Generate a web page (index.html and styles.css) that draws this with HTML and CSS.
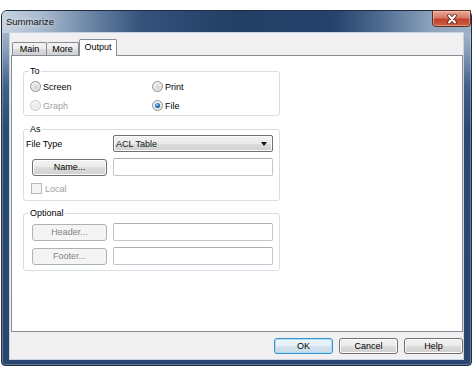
FILE: index.html
```html
<!DOCTYPE html>
<html lang="en">
<head>
  <meta charset="UTF-8" />
  <title>Summarize</title>
  <link rel="stylesheet" href="styles.css">
</head>
<body>
  <div class="window">
    <div class="titlebar">
      <span class="title">Summarize</span>
      <button class="close" aria-label="Close">
        <svg width="14" height="10" viewBox="0 0 14 10">
          <path d="M4 1.5 L10 8.5 M10 1.5 L4 8.5" stroke="#5a2418" stroke-width="3.6" stroke-linecap="round" fill="none"/>
          <path d="M4 1.5 L10 8.5 M10 1.5 L4 8.5" stroke="#ffffff" stroke-width="2" stroke-linecap="round" fill="none"/>
        </svg>
      </button>
    </div>

    <div class="frame">
      <div class="client">
        <div class="tabs">
          <div class="tab">Main</div>
          <div class="tab tab-more">More</div>
          <div class="tab active">Output</div>
        </div>

        <div class="panel">
          <fieldset class="group group-to">
            <legend>To</legend>
            <div class="radio-grid">
              <label class="radio"><span class="dot"></span>Screen</label>
              <label class="radio"><span class="dot"></span>Print</label>
              <label class="radio disabled"><span class="dot"></span>Graph</label>
              <label class="radio checked"><span class="dot"></span>File</label>
            </div>
          </fieldset>

          <fieldset class="group group-as">
            <legend>As</legend>
            <div class="form-grid">
              <span class="field-label">File Type</span>
              <div class="combo"><span>ACL Table</span><span class="arrow"></span></div>

              <button class="btn btn-side">Name...</button>
              <div class="textbox"></div>

              <label class="check disabled"><span class="box"></span>Local</label>
            </div>
          </fieldset>

          <fieldset class="group group-optional">
            <legend>Optional</legend>
            <div class="form-grid">
              <button class="btn btn-side" disabled>Header...</button>
              <div class="textbox"></div>

              <button class="btn btn-side" disabled>Footer...</button>
              <div class="textbox"></div>
            </div>
          </fieldset>
        </div>

        <div class="actions">
          <button class="btn btn-action default">OK</button>
          <button class="btn btn-action">Cancel</button>
          <button class="btn btn-action">Help</button>
        </div>
      </div>
    </div>
  </div>
</body>
</html>
```

FILE: styles.css
```css
body {
  margin: 0;
  background: #ffffff;
  font-family: 'Liberation Sans', Arial, sans-serif;
  font-size: 9px;
  color: #000;
}
.window {
  box-sizing: border-box;
  width: 471px;
  height: 356px;
  margin: 10px 0 0 1px;
  border: 1px solid #1c2d44;
  border-radius: 6px 6px 4px 4px;
  background: linear-gradient(to bottom, #b9c8d9 0, #8fa5be 35px, #41618a 75px, #2b4a71 120px, #284670 100%);
  box-shadow: inset 0 0 0 1px rgba(255, 255, 255, 0.28);
  display: flex;
  flex-direction: column;
}
.titlebar {
  height: 22px;
  display: flex;
  align-items: flex-start;
  justify-content: space-between;
  padding-left: 4px;
  border-radius: 5px 5px 0 0;
  background: linear-gradient(to right, #c6d2e0 0, #a8b9cd 40px, #6983a5 90px, #34527a 140px, #223f66 230px, #24426a 330px, #4f6d92 380px, #8ea3bc 430px, #9fb1c6 100%);
}
.title {
  line-height: 22px;
  font-size: 9.5px;
  color: #111;
  text-shadow: 0 0 5px rgba(255, 255, 255, 0.9);
}
.close {
  width: 39px;
  height: 17px;
  margin-top: -1px;
  padding: 0;
  border: 1px solid #5b2a22;
  border-radius: 0 0 4px 4px;
  background: linear-gradient(to bottom, #e9a796 0, #d57a66 45%, #c1412a 55%, #cf5d3d 100%);
  box-shadow: inset 0 0 0 1px rgba(255, 220, 210, 0.45);
  display: flex;
  align-items: center;
  justify-content: center;
}
.frame {
  flex: 1;
  padding: 0 8px 6px 8px;
  display: flex;
}
.client {
  flex: 1;
  background: #f0f0f0;
  box-shadow: 0 0 0 1px #c9d4e1;
  padding: 6px 0 0 1px;
  display: flex;
  flex-direction: column;
}
.tabs {
  height: 16px;
  padding-left: 1px;
  display: flex;
  align-items: flex-end;
}
.tab {
  box-sizing: border-box;
  height: 13px;
  width: 35px;
  line-height: 12px;
  text-align: center;
  border: 1px solid #898c95;
  border-bottom: none;
  border-radius: 2px 2px 0 0;
  background: linear-gradient(to bottom, #f3f3f3 0, #ebebeb 50%, #dddddd 50%, #cfcfcf 100%);
}
.tab + .tab {
  border-left: none;
}
.tab-more {
  width: 32px;
}
.tab.active {
  height: 17px;
  width: 38px;
  margin-bottom: -1px;
  line-height: 14px;
  background: #ffffff;
  border-left: 1px solid #898c95;
  position: relative;
}
.panel {
  box-sizing: border-box;
  height: 277px;
  border: 1px solid #898c95;
  background: #ffffff;
  padding: 9px 0 0 11px;
}
.group {
  box-sizing: border-box;
  width: 257px;
  margin: 0;
  padding: 0;
  min-width: 0;
  border: 1px solid #d5dfe5;
  border-radius: 3px;
}
.group legend {
  padding: 0 1px;
  margin-left: 5px;
  line-height: 12px;
}
.group-as {
  margin-top: 7px;
  padding-bottom: 5px;
}
.group-optional {
  margin-top: 6px;
  padding-bottom: 5px;
}
.radio-grid {
  margin-left: 6px;
  display: grid;
  grid-template-columns: 122px 122px;
  grid-auto-rows: 19px;
}
.radio {
  display: flex;
  align-items: center;
  gap: 2px;
}
.radio .dot {
  box-sizing: border-box;
  width: 11px;
  height: 11px;
  border-radius: 50%;
  border: 1px solid #8e8f8f;
  background: radial-gradient(circle at 55% 60%, #d2d2d2 0, #ececec 55%, #fafafa 100%);
  display: flex;
  align-items: center;
  justify-content: center;
}
.radio.disabled {
  color: #a0a0a0;
}
.radio.disabled .dot {
  border-color: #c8c8c8;
  background: radial-gradient(circle at 55% 60%, #e6e6e6 0, #f4f4f4 60%, #fcfcfc 100%);
}
.radio.checked .dot::after {
  content: "";
  width: 5px;
  height: 5px;
  border-radius: 50%;
  background: radial-gradient(circle at 40% 35%, #9ad8fa 0, #2a78bd 45%, #17426f 100%);
}
.form-grid {
  margin-left: 2px;
  display: grid;
  grid-template-columns: 87px 160px;
  align-items: center;
}
.group-as .form-grid {
  grid-template-rows: 17px 18px 13px;
  row-gap: 6px;
}
.group-optional .form-grid {
  margin-top: 4px;
  grid-template-rows: 18px 18px;
  row-gap: 6px;
}
.combo {
  box-sizing: border-box;
  height: 17px;
  border: 1px solid #707070;
  border-radius: 2px;
  background: linear-gradient(to bottom, #f2f2f2 0, #ebebeb 50%, #dddddd 50%, #cfcfcf 100%);
  box-shadow: inset 0 0 0 1px #fbfbfb;
  padding: 0 5px 0 2px;
  display: flex;
  align-items: center;
  justify-content: space-between;
  color: #111;
}
.arrow {
  width: 0;
  height: 0;
  border-top: 4px solid #111;
  border-left: 3px solid transparent;
  border-right: 3px solid transparent;
}
.textbox {
  box-sizing: border-box;
  height: 18px;
  border: 1px solid #c3c7cc;
  border-top-color: #abadb3;
  border-radius: 2px;
  background: #ffffff;
}
.btn {
  box-sizing: border-box;
  font: inherit;
  color: #000;
  padding: 0;
  border: 1px solid #707070;
  border-radius: 3px;
  background: linear-gradient(to bottom, #f2f2f2 0, #ebebeb 50%, #dddddd 50%, #cfcfcf 100%);
  box-shadow: inset 0 0 0 1px #fcfcfc;
}
.btn:disabled {
  color: #838383;
  border-color: #adb2b5;
  background: #f4f4f4;
  box-shadow: none;
}
.btn-side {
  width: 75px;
  height: 17px;
  margin-left: 6px;
}
.check {
  grid-column: 1 / 3;
  margin-left: 5px;
  display: flex;
  align-items: center;
  gap: 3px;
}
.check.disabled {
  color: #a0a0a0;
}
.check .box {
  box-sizing: border-box;
  width: 11px;
  height: 11px;
  border: 1px solid #b8b8b8;
  background: #f4f4f4;
}
.actions {
  margin-top: 6px;
  display: flex;
  justify-content: flex-end;
  gap: 6px;
}
.btn-action {
  width: 59px;
  height: 16px;
}
.btn.default {
  border-color: #3c93cf;
  box-shadow: inset 0 0 0 1px #a8def6;
  background: linear-gradient(to bottom, #eef6fb 0, #e5eff6 50%, #d6e5ef 50%, #c8dbe8 100%);
}
```
